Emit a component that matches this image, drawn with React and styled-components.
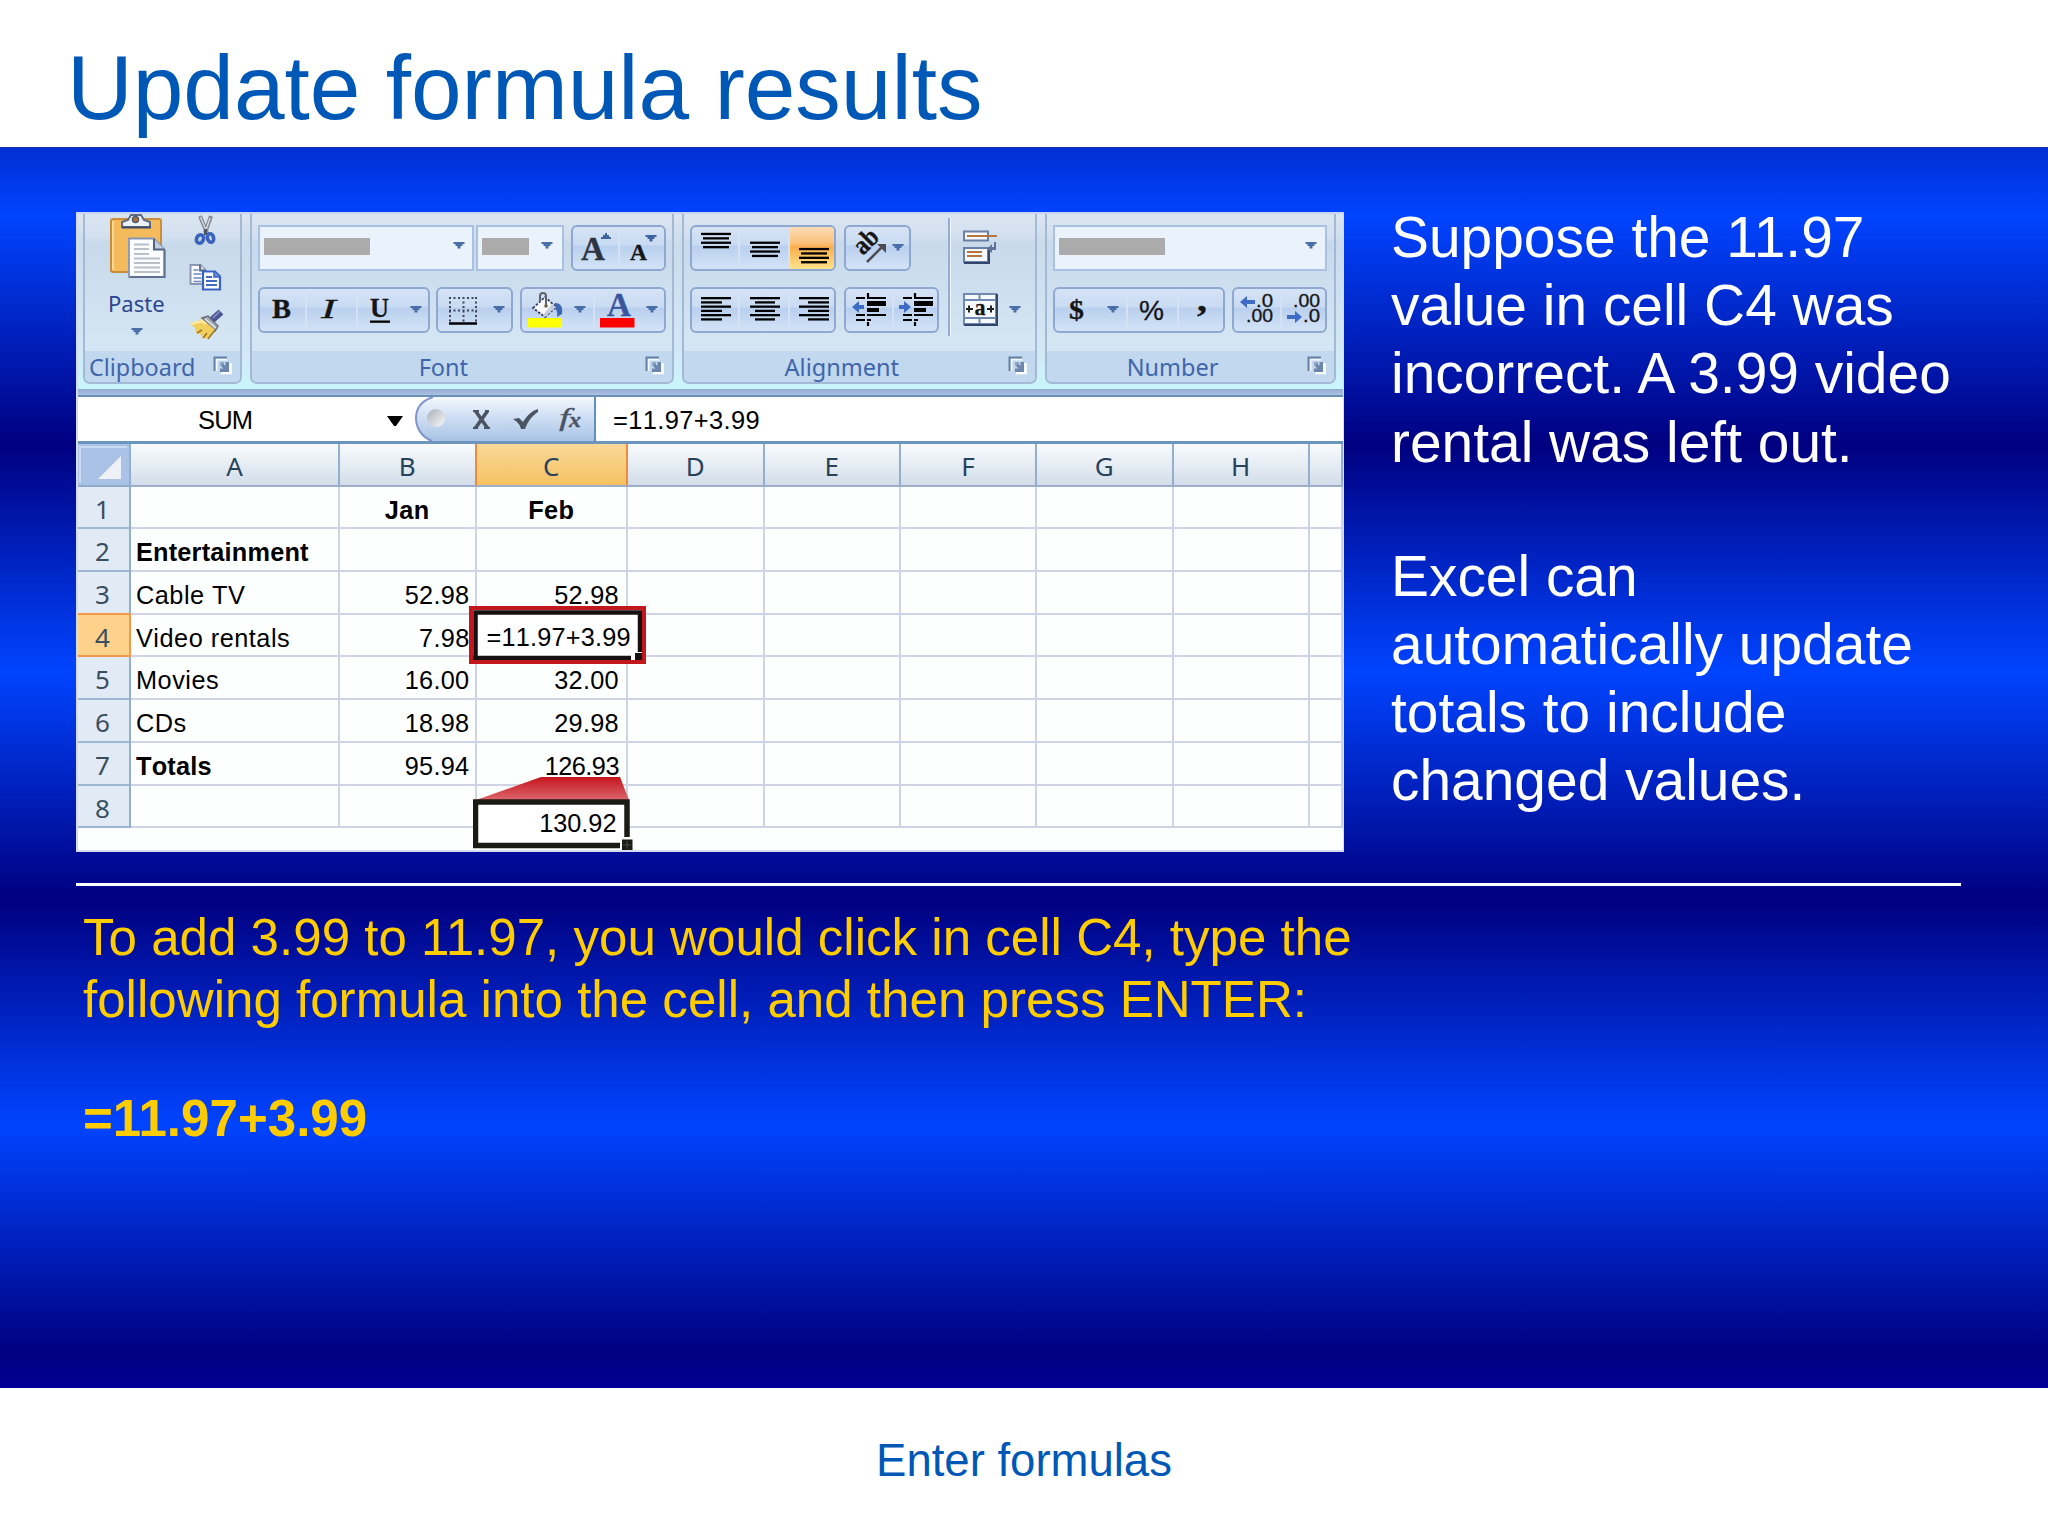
import React from "react";
import styled, { createGlobalStyle, css } from "styled-components";

const Global = createGlobalStyle`
  * { box-sizing: border-box; }
  body { margin: 0; background: #fff; }
`;

const sans = `"Liberation Sans", Arial, sans-serif`;
const ui = `"Noto Sans", "Open Sans", sans-serif`;

/* ---------- slide ---------- */
const Slide = styled.main`
  width: 2048px;
  height: 1536px;
  display: flex;
  flex-direction: column;
  background: #fff;
  font-family: ${sans};
  overflow: hidden;
`;
const Header = styled.header`
  height: 147px;
  padding: 33px 0 0 67px;
`;
const Title = styled.h1`
  margin: 0;
  font-size: 91px;
  line-height: 110px;
  font-weight: 400;
  color: #0058b6;
  white-space: nowrap;
`;
const Body = styled.section`
  height: 1241px;
  padding: 55px 87px 0 76px;
  border-top: 1px solid #1430b4;
  background: linear-gradient(
    180deg,
    #0030d2 0px,
    #0044ff 68px,
    #000080 297px,
    #0044ff 523px,
    #000080 751px,
    #0044ff 977px,
    #000080 1205px,
    #000096 1241px
  );
`;
const Top = styled.div`
  display: flex;
  height: 680px;
`;
const Aside = styled.div`
  margin-left: 47px;
  color: #fff;
  font-size: 56.9px;
  line-height: 68.2px;
  white-space: nowrap;
`;
const Para = styled.p`
  margin: 0 0 ${(p) => p.$gap || 0}px;
  font-weight: ${(p) => (p.$bold ? 700 : 400)};
`;
const Divider = styled.hr`
  margin: 0;
  border: 0;
  height: 3px;
  background: #fff;
`;
const Steps = styled.div`
  padding: 21px 0 0 7px;
  color: #ffcc00;
  font-size: 51.1px;
  line-height: 61.6px;
  white-space: nowrap;
`;
const Footer = styled.footer`
  padding-top: 43px;
  text-align: center;
  font-size: 45.5px;
  line-height: 60px;
  color: #0058b6;
`;

/* ---------- workbook ---------- */
const Shot = styled.figure`
  margin: 9px 0 0;
  width: 1268px;
  height: 640px;
  display: flex;
  flex-direction: column;
  border: 2px solid #d5dcf2;
  border-top-color: #c9d4ee;
  border-right-width: 1px;
  background: #fdfffe;
  overflow: hidden;
`;
const Ribbon = styled.div`
  height: 175px;
  padding: 0 7px 5px 5px;
  display: flex;
  gap: 8px;
  background: linear-gradient(180deg, #dde5f0 0, #cbdcec 30px, #d3e8f6 140px, #c9f5fb 172px, #c4f7fd 100%);
`;
const RibbonEdge = styled.div`
  height: 8px;
  border-bottom: 2px solid #6a90b6;
  background: linear-gradient(180deg, #93abcf, #abc2e4);
`;
const Group = styled.section`
  width: ${(p) => p.$w}px;
  display: flex;
  flex-direction: column;
  border: 2px solid #a3b9d6;
  border-top: 0;
  border-radius: 0 0 7px 7px;
  background: linear-gradient(180deg, #dbe5f1 0, #d3e0ef 22px, #c8d9eb 30px, #d5e6f4 137px);
  overflow: hidden;
`;
const Controls = styled.div`
  flex: 1;
  display: flex;
  flex-direction: column;
  padding: 11px 0 0 6px;
  gap: 16px;
`;
const ControlRow = styled.div`
  display: flex;
  height: 46px;
`;
const Caption = styled.div`
  height: 31px;
  display: flex;
  justify-content: space-between;
  padding: 0 8px 0 ${(p) => p.$pl}px;
  background: #c1d8ee;
  color: #4065ab;
  font: 400 ${(p) => p.$size || 23.5}px/32px ${ui};
  svg { margin-top: 5px; }
`;
const Buttons = styled.div`
  display: flex;
  height: 46px;
  margin-right: ${(p) => p.$mr || 0}px;
  border: 2px solid #8ea8d1;
  border-radius: 6px;
  background: linear-gradient(180deg, #d5e3f5 0, #c9dbf2 42%, #b9cfee 46%, #d3e4f7 100%);
`;
const Tool = styled.div`
  width: ${(p) => p.$w}px;
  height: 42px;
  border-right: ${(p) => (p.$last ? 0 : 2)}px solid #d3e2f5;
  ${(p) => p.$on && css`
    border-radius: 0 4px 4px 0;
    background: linear-gradient(180deg, #fbdcb4 0, #fcc27c 38%, #fbae4c 48%, #fee48c 100%);
  `}
  svg { display: block; overflow: visible; }
`;
const Combo = styled.div`
  width: ${(p) => p.$w}px;
  height: 46px;
  margin-right: ${(p) => p.$mr || 0}px;
  display: flex;
  align-items: center;
  justify-content: space-between;
  padding: 0 ${(p) => p.$pr || 7}px 4px 4px;
  border: 2px solid #abc1e3;
  background: #eaf2fc;
`;
const Redacted = styled.div`
  width: ${(p) => p.$w}px;
  height: 17px;
  background: #ababab;
`;
const ClipboardArea = styled.div`
  flex: 1;
  display: flex;
`;
const PasteButton = styled.div`
  width: 94px;
  padding-left: 23px;
  display: flex;
  flex-direction: column;
  gap: 5px;
  svg { display: block; }
`;
const PasteLabel = styled.span`
  height: 29px;
  color: #2b4690;
  font: 400 22px/28px ${ui};
`;
const SmallTools = styled.div`
  padding: 0 0 0 9px;
  svg { display: block; }
`;

const FormulaBar = styled.div`
  height: 47px;
  display: flex;
  border-bottom: 3px solid #6b95bd;
  background: #fff;
  color: #000;
  font: 25.5px/46px ${sans};
  font-kerning: none;
`;
const NameBox = styled.div`
  width: 337px;
  display: flex;
  justify-content: space-between;
  padding: 0 12px 0 120px;
  letter-spacing: -0.8px;
  svg { margin-top: 19px; }
`;
const Functions = styled.div`
  width: 181px;
  border-right: 2px solid #5f8fbd;
  svg { display: block; }
`;
const Entry = styled.div`
  padding-left: 17px;
  letter-spacing: 0.35px;
`;

const Sheet = styled.div`
  display: grid;
  grid-template-columns: 53px 209px 136.5px 151.5px 136.5px 136.5px 136px 136.5px 136.5px 1fr;
  grid-template-rows: 42.5px repeat(8, 42.72px);
  font: 25.3px/43px ${sans};
  font-kerning: none;
  color: #000;
`;
const ColHead = styled.div`
  border-right: 2px solid #93afcd;
  border-bottom: 2px solid #9cafc9;
  background: linear-gradient(180deg, #f8fbfd, #e4ebf2 55%, #d2dde9);
  color: #27435c;
  text-align: center;
  font: 26px/44px ${ui};
  ${(p) => p.$on && css`
    margin-left: -2px;
    border-right-color: #ee8c3e;
    border-left: 2px solid #ee8c3e;
    background: linear-gradient(180deg, #fad898, #f5c263);
  `}
`;
const Corner = styled.div`
  border-right: 2px solid #8fb0d4;
  border-bottom: 2px solid #8fabd0;
  background: #a9c2e5;
  svg { display: block; }
`;
const RowHead = styled.div`
  border-right: 2px solid #8fb0cf;
  border-bottom: 2px solid #9cb5d0;
  background: #e2eaf6;
  color: #3a4f5e;
  padding-right: 2px;
  text-align: center;
  font: 26px/44px ${ui};
  ${(p) => p.$on && css`
    margin-top: -2px;
    border: 2px solid #ee9a4a;
    border-left: 0;
    background: #fed28a;
  `}
`;
const Cell = styled.div`
  position: relative;
  border-right: 2px solid #cfd3e6;
  border-bottom: 2px solid #cfd3e3;
  padding: 2px ${(p) => p.$pr ?? 0}px 0 ${(p) => p.$pl ?? 0}px;
  text-align: ${(p) => p.$align || "left"};
  font-weight: ${(p) => (p.$bold ? 700 : 400)};
  letter-spacing: ${(p) => p.$track ?? 0}px;
  white-space: nowrap;
`;
const Editing = styled.div`
  position: absolute;
  z-index: 2;
  left: -8px;
  top: -9px;
  width: 177px;
  height: 58px;
  border: 4px solid #c2181d;
  background: #fff;
  svg { position: absolute; left: 0; top: 0; }
  span { position: absolute; left: 14px; top: 6px; letter-spacing: 0.2px; }
`;
const Result = styled.div`
  position: absolute;
  z-index: 2;
  left: -4px;
  top: -9px;
  width: 160px;
  height: 74px;
  svg { position: absolute; left: 0; top: 0; }
  span { position: absolute; right: 16px; top: 25px; }
`;

/* ---------- drawings ---------- */
const Glyph = ({ x, y = 0, w, h = 42, children }) => (
  <svg width={w} height={h} viewBox={`${x} ${y} ${w} ${h}`}>{children}</svg>
);
const Drop = ({ x, y, fill = "#4a6ea8" }) => (
  <path d={`M${x - 5.5} ${y}h11v2h-2v2h-2v2.5h-3v-2.5h-2v-2h-2z`} fill={fill} />
);
const DropIcon = () => (
  <svg width="12" height="8" viewBox="0 0 12 8"><Drop x={6} y={0} /></svg>
);
const Lines = ({ x, y, widths, align = "center", step = 4.4 }) => (
  <g fill="#000">
    {widths.map((w, i) => (
      <rect key={i} x={align === "left" ? x : align === "right" ? x + 30 - w : x + (30 - w) / 2} y={y + i * step} width={w} height="2.3" />
    ))}
  </g>
);
const Launcher = () => (
  <svg width="19" height="19" viewBox="0 0 19 19">
    <path d="M3.500 15V3.500H14" fill="none" stroke="#fff" strokeWidth="2" opacity=".8" />
    <path d="M1.500 15V1.500H14" fill="none" stroke="#6380a5" strokeWidth="2" />
    <path d="M8 17h9.500V7" fill="none" stroke="#fff" strokeWidth="2.500" />
    <path d="M12.500 6H16v10H7v-3.500h3.500L7.500 9.500 9.500 7l3 3z" fill="#6c87ab" />
    <path d="M7 6h4v2H9v2H7z" fill="#8ea6c4" />
  </svg>
);
const PasteIcon = () => (
  <svg width="60" height="70" viewBox="108 214 60 70">
    <rect x="111" y="219" width="50" height="53" rx="2" fill="#f3bb5b" stroke="#c98e3a" strokeWidth="2" />
    <path d="M113 221v49" stroke="#fbd893" strokeWidth="2" />
    <path d="M122 227v-5l6-2 3-5h10l3 5 6 2v5z" fill="#eef1f6" stroke="#5f6b86" strokeWidth="2" />
    <path d="M122 227.500h29" stroke="#3e4a66" strokeWidth="2" />
    <circle cx="135.500" cy="219.500" r="3" fill="#b0742e" stroke="#525c75" strokeWidth="1.500" />
    <path d="M129 238.500h25l10.500 11V277H129z" fill="#fbfcfe" stroke="#8796b3" strokeWidth="1.800" />
    <path d="M154 239v10.500h10.500" fill="#c3cde0" stroke="#52617f" strokeWidth="2" />
    <path d="M164.500 250v27H130" fill="none" stroke="#5f7193" strokeWidth="2" />
    <path d="M134 244.500h15M134 249h15M134 254h15M134 258.500h26M134 263h26M134 267.500h26M134 272h26" stroke="#b9bfcb" strokeWidth="1.800" />
  </svg>
);
const CutIcon = () => (
  <svg width="36" height="46" viewBox="188 214 36 46">
    <path d="M200 216l7 17M211 216l-6 17" stroke="#858b96" strokeWidth="4" />
    <path d="M200.500 217l5 12M210 218l-4 12" stroke="#d6dae0" strokeWidth="1.300" />
    <path d="M205.500 229v6" stroke="#4c5364" strokeWidth="3" />
    <ellipse cx="200" cy="239" rx="3.400" ry="4.400" fill="#c6d6f0" stroke="#3b63bb" strokeWidth="3.600" transform="rotate(25 200 239)" />
    <ellipse cx="210.500" cy="238" rx="3.100" ry="4.300" fill="#c6d6f0" stroke="#3b63bb" strokeWidth="3.600" transform="rotate(-15 210.500 238)" />
  </svg>
);
const CopyIcon = () => (
  <svg width="36" height="48" viewBox="188 260 36 48">
    <path d="M190.500 265h10l5 5v14h-15z" fill="#fbfcff" stroke="#8b98b5" strokeWidth="2" />
    <path d="M200 264.500v6h6" fill="#cfd8e8" stroke="#5d6680" strokeWidth="1.800" />
    <path d="M193.500 270h5M193.500 274h8M193.500 278h8M193.500 281.500h8" stroke="#6d86c0" strokeWidth="1.500" />
    <path d="M203 271.500h12l5 5V289.500h-17z" fill="#fbfcff" stroke="#3a62c0" strokeWidth="2.200" />
    <path d="M214 271.500v5.500h6" fill="#6e8fd6" stroke="#3a62c0" strokeWidth="1.500" />
    <path d="M206 277h6M206 281h11M206 285h11" stroke="#4169c2" strokeWidth="1.800" />
  </svg>
);
const BrushIcon = () => (
  <svg width="38" height="36" viewBox="188 308 38 36">
    <path d="M212 320l9-8" stroke="#4c5592" strokeWidth="7" />
    <path d="M213 318l7-7" stroke="#8f97c8" strokeWidth="1.500" />
    <path d="M202 318l6-2 10 10-3 5z" fill="#a8adb6" stroke="#6a6f7c" strokeWidth="1.500" />
    <path d="M205 319l11 9" stroke="#e3e6ea" strokeWidth="1.500" />
    <path d="M190 324l12-5 13 11-7 9-5-1-3-4-4-1-1-5z" fill="#f1ce5c" />
    <path d="M191 324l11-3 4 3" stroke="#fae9a4" strokeWidth="2.500" fill="none" />
    <path d="M197 333l5-3M203 338l4-5M215 330l-7 9" stroke="#9c7a2c" strokeWidth="1.600" />
  </svg>
);
const serif = "Liberation Serif, serif";
const Letter = ({ x, y, size, fill = "#151515", weight = 700, style, children, w, family = serif }) => (
  <text x={x} y={y} fontFamily={family} fontSize={size} fontWeight={weight} fontStyle={style} fill={fill}
    textLength={w} lengthAdjust="spacingAndGlyphs" stroke={fill} strokeWidth=".3">{children}</text>
);
const Indent = ({ x, out }) => (
  <g>
    <path d={`M${x + 4} 298h9M${x + 4} 315h9M${x + 4} 320h9M${x + 15} 298h19M${x + 15} 315h19M${x + 15} 320h4`} stroke="#000" strokeWidth="2.200" />
    <path d={`M${x + 16} 293v4M${x + 16} 322v4`} stroke="#000" strokeWidth="2.200" />
    <rect x={x + 15} y="301" width="19" height="5" />
    <rect x={x + 15} y="308" width="12" height="4" />
    {out
      ? <path d={`M${x} 307l7-6v4h5v4h-5v4z`} fill="#3e6bc6" />
      : <path d={`M${x + 12} 307l-7-6v4h-5v4h5v4z`} fill="#3e6bc6" />}
  </g>
);

/* ---------- data ---------- */
const rows = [
  ["", "Jan", "Feb"],
  ["Entertainment", "", ""],
  ["Cable TV", "52.98", "52.98"],
  ["Video rentals", "7.98", ""],
  ["Movies", "16.00", "32.00"],
  ["CDs", "18.98", "29.98"],
  ["Totals", "95.94", "126.93"],
  ["", "", ""],
];

const ClipboardGroup = () => (
  <Group $w={159}>
    <ClipboardArea>
      <PasteButton>
        <PasteIcon />
        <PasteLabel>Paste</PasteLabel>
        <svg width="60" height="20" viewBox="108 322 60 20"><Drop x={137} y={327} /></svg>
      </PasteButton>
      <SmallTools>
        <CutIcon />
        <CopyIcon />
        <BrushIcon />
      </SmallTools>
    </ClipboardArea>
    <Caption $pl={4} $size={23.4}>Clipboard<Launcher /></Caption>
  </Group>
);

const FontGroup = () => (
  <Group $w={425}>
    <Controls>
      <ControlRow>
        <Combo $w={216} $mr={2}><Redacted $w={106} /><DropIcon /></Combo>
        <Combo $w={88} $pr={9} $mr={7}><Redacted $w={47} /><DropIcon /></Combo>
        <Buttons>
          <Tool $w={47}><Glyph x={573} y={227} w={45}>
            <Letter x={581} y={260} size={33} w={24} fill="#2e3340">A</Letter>
            <path d="M601 239h10v-2h-2v-2h-2v-2h-2v2h-2v2h-2z" fill="#3f64a4" />
          </Glyph></Tool>
          <Tool $w={44} $last><Glyph x={620} y={227} w={44}>
            <Letter x={630} y={260} size={23} w={17}>A</Letter>
            <Drop x={651} y={235} fill="#3f64a4" />
          </Glyph></Tool>
        </Buttons>
      </ControlRow>
      <ControlRow>
        <Buttons $mr={6}>
          <Tool $w={47}><Glyph x={260} y={289} w={45}><Letter x={272} y={318} size={28} w={19}>B</Letter></Glyph></Tool>
          <Tool $w={51}><Glyph x={307} y={289} w={49}><Letter x={321} y={318} size={28} w={15} weight={400} style="italic">I</Letter></Glyph></Tool>
          <Tool $w={70} $last><Glyph x={358} y={289} w={70}>
            <Letter x={370} y={317} size={27} w={19}>U</Letter>
            <rect x="370" y="320.500" width="20" height="2.300" />
            <Drop x={416} y={306} />
          </Glyph></Tool>
        </Buttons>
        <Buttons $mr={7}>
          <Tool $w={73} $last><Glyph x={438} y={289} w={73}>
            <path d="M449 298h28M449 310.500h28M450 297v26M463.500 297v26M476 297v26" stroke="#3c4658" strokeWidth="2" strokeDasharray="2 2.500" />
            <path d="M449 323.500h28" stroke="#000" strokeWidth="2.500" />
            <Drop x={499} y={306} />
          </Glyph></Tool>
        </Buttons>
        <Buttons>
          <Tool $w={73}><Glyph x={522} y={289} w={71}>
            <path d="M555 303c6 0 8 4 7 11l-5 3c1-6-1-9-5-10z" fill="#3f68b4" />
            <path d="M533 308l12-11 11 10-11 10z" fill="#f7f9fc" stroke="#35405c" strokeWidth="1.800" strokeDasharray="2.500 1.500" />
            <path d="M545 317l11-10-4-3-9 11z" fill="#c3cede" />
            <path d="M540 302v-6c0-4 6-4 6 0v9" fill="none" stroke="#5c636f" strokeWidth="2" />
            <circle cx="546" cy="306" r="1.800" fill="#6d6148" />
            <rect x="528" y="318" width="34" height="9.500" fill="#ff0" />
            <Drop x={580} y={306} />
          </Glyph></Tool>
          <Tool $w={69} $last><Glyph x={595} y={289} w={69}>
            <Letter x={607} y={315.5} size={33} w={24} fill="#3a559c">A</Letter>
            <rect x="600" y="318" width="34.500" height="9.500" fill="#f00" />
            <Drop x={652} y={306} />
          </Glyph></Tool>
        </Buttons>
      </ControlRow>
    </Controls>
    <Caption $pl={167}>Font<Launcher /></Caption>
  </Group>
);

const AlignSplit = styled.div`
  display: flex;
`;
const AlignLeft = styled.div`
  width: 258px;
  display: flex;
  flex-direction: column;
  gap: 16px;
`;
const Rule = styled.div`
  width: 3px;
  height: 118px;
  margin-top: -7px;
  border-left: 2px solid #93aed4;
  border-right: 1px solid #eef5fc;
`;

const AlignmentGroup = () => (
  <Group $w={356}>
    <Controls>
      <AlignSplit>
        <AlignLeft>
          <ControlRow>
            <Buttons $mr={8}>
              <Tool $w={48}><Glyph x={692} y={227} w={46}><Lines x={701} y={232.8} widths={[30, 26, 30, 26]} /></Glyph></Tool>
              <Tool $w={50}><Glyph x={740} y={227} w={48}><Lines x={750} y={241.6} widths={[30, 26, 30, 26]} /></Glyph></Tool>
              <Tool $w={44} $last $on><Glyph x={790} y={227} w={44}><Lines x={799} y={247.9} widths={[30, 26, 30, 26]} /></Glyph></Tool>
            </Buttons>
            <Buttons>
              <Tool $w={63} $last><Glyph x={846} y={227} w={63}>
                <g transform="translate(863 256) rotate(-45)"><Letter x={0} y={0} size={27} w={25}>ab</Letter></g>
                <path d="M867 262l16-16" stroke="#4c4c55" strokeWidth="2.500" />
                <path d="M877 244h9v9z" fill="#4c4c55" />
                <Drop x={898} y={244} />
              </Glyph></Tool>
            </Buttons>
          </ControlRow>
          <ControlRow>
            <Buttons $mr={8}>
              <Tool $w={48}><Glyph x={692} y={289} w={46}><Lines x={701} y={297} align="left" widths={[30, 21, 30, 21, 30, 21]} step={4.25} /></Glyph></Tool>
              <Tool $w={50}><Glyph x={740} y={289} w={48}><Lines x={750} y={297} widths={[30, 20, 30, 20, 30, 20]} step={4.25} /></Glyph></Tool>
              <Tool $w={44} $last><Glyph x={790} y={289} w={44}><Lines x={799} y={297} align="right" widths={[30, 21, 30, 21, 30, 21]} step={4.25} /></Glyph></Tool>
            </Buttons>
            <Buttons>
              <Tool $w={48}><Glyph x={846} y={289} w={46}><Indent x={852} out /></Glyph></Tool>
              <Tool $w={43} $last><Glyph x={894} y={289} w={43}><Indent x={899} /></Glyph></Tool>
            </Buttons>
          </ControlRow>
        </AlignLeft>
        <Rule />
        <Glyph x={951} y={225} w={80} h={110}>
          <path d="M964 231.500h24v9h-24z" fill="#f6f9fd" stroke="#6a7fa4" strokeWidth="2" />
          <path d="M967 236h30" stroke="#b5763f" strokeWidth="2.200" />
          <path d="M964 248h24v14h-24z" fill="#f6f9fd" stroke="#6a7fa4" strokeWidth="2" />
          <path d="M989 249v14h-25" stroke="#34466b" strokeWidth="2" fill="none" />
          <path d="M967 252h15M967 256h15" stroke="#b5763f" strokeWidth="2" />
          <path d="M996 242v8h-4v3l-5-4 5-5v3h2v-5z" fill="#5e7397" />
          <path d="M964 294h32v30h-32z" fill="#f6f9fd" stroke="#7088b4" strokeWidth="2" />
          <path d="M964 300h32M964 318h32M979.500 294v6M979.500 318v6" stroke="#7088b4" strokeWidth="2" />
          <path d="M997 294v31h-33" fill="none" stroke="#34466b" strokeWidth="2" />
          <Letter x={974.5} y={315} size={24} w={11}>a</Letter>
          <path d="M966 309h7M987 309h7M969 305.500v7M991 305.500v7" stroke="#222" strokeWidth="2" />
          <Drop x={1015} y={306} />
        </Glyph>
      </AlignSplit>
    </Controls>
    <Caption $pl={101}>Alignment<Launcher /></Caption>
  </Group>
);

const NumberGroup = () => (
  <Group $w={292}>
    <Controls>
      <ControlRow>
        <Combo $w={274} $pr={8}><Redacted $w={106} /><DropIcon /></Combo>
      </ControlRow>
      <ControlRow>
        <Buttons $mr={7}>
          <Tool $w={73}><Glyph x={1055} y={289} w={71}>
            <Letter x={1069} y={319} size={28} w={15}>$</Letter>
            <Drop x={1113} y={306} />
          </Glyph></Tool>
          <Tool $w={51}><Glyph x={1128} y={289} w={49}><Letter x={1139} y={320} size={28} w={25} weight={400} family={sans}>%</Letter></Glyph></Tool>
          <Tool $w={44} $last><Glyph x={1179} y={289} w={44}><Letter x={1197} y={311} size={34} w={10}>,</Letter></Glyph></Tool>
        </Buttons>
        <Buttons>
          <Tool $w={48}><Glyph x={1234} y={289} w={46}>
            <Letter x={1256} y={307} size={17.5} w={17} weight={400} family={sans}>.0</Letter>
            <Letter x={1246} y={322} size={17.5} w={27} weight={400} family={sans}>.00</Letter>
            <path d="M1240 302l7-6v4h8v4h-8v4z" fill="#3e6bc6" />
          </Glyph></Tool>
          <Tool $w={43} $last><Glyph x={1282} y={289} w={43}>
            <Letter x={1293} y={307} size={17.5} w={27} weight={400} family={sans}>.00</Letter>
            <Letter x={1303} y={322} size={17.5} w={17} weight={400} family={sans}>.0</Letter>
            <path d="M1302 317l-7-6v4h-8v4h8v4z" fill="#3e6bc6" />
          </Glyph></Tool>
        </Buttons>
      </ControlRow>
    </Controls>
    <Caption $pl={80}>Number<Launcher /></Caption>
  </Group>
);

const FunctionIcons = () => (
  <svg width="179" height="44" viewBox="415 397 179 44">
    <defs>
      <linearGradient id="bar" x1="0" y1="0" x2="0" y2="1">
        <stop offset="0" stopColor="#f3f8fd" /><stop offset=".45" stopColor="#cfdff3" /><stop offset="1" stopColor="#a9c3e6" />
      </linearGradient>
      <linearGradient id="ball" x1="0" y1="0" x2="1" y2="1">
        <stop offset="0" stopColor="#a9adb6" /><stop offset="1" stopColor="#fafbfd" />
      </linearGradient>
    </defs>
    <path d="M436 397C422 399 416 408 416 418s6 21 18 23h160v-44z" fill="url(#bar)" />
    <path d="M433 397C421 401 416 409 416 418s5 19 16 23" fill="none" stroke="#7f95cc" strokeWidth="2" />
    <circle cx="436" cy="418" r="9" fill="url(#ball)" />
    <path d="M473 411h6M485 411h4M473 428h5M484 428h6" fill="none" stroke="#4a5463" strokeWidth="2" />
    <path d="M475.500 411l12 17M487.500 411l-12 17" stroke="#4a5463" strokeWidth="3.600" />
    <path d="M513 419l6-1 4 4c4-6 8-11 15-13v3c-6 4-10 9-13 17h-4c-1-4-3-7-8-10z" fill="#4a5463" />
    <Letter x={559} y={426} size={26} w={11} fill="#4a5463" style="italic" weight={400}>f</Letter>
    <Letter x={569} y={427} size={20} w={12} fill="#4a5463" style="italic">x</Letter>
  </svg>
);

const renderCell = (r, c) => {
  const v = c < 3 ? rows[r][c] : "";
  const key = `${r}-${c}`;
  if (r === 3 && c === 2)
    return (
      <Cell key={key}>
        <Editing>
          <svg width="169" height="50" viewBox="472 610 169 50">
            <path d="M474.500 660V612.500H639V652" fill="none" stroke="#141110" strokeWidth="4.500" />
            <path d="M472 658h158" stroke="#141110" strokeWidth="4.500" />
            <path d="M634 653h7v7h-7z" fill="#141110" />
          </svg>
          <span>=11.97+3.99</span>
        </Editing>
      </Cell>
    );
  if (r === 7 && c === 2)
    return (
      <Cell key={key}>
        <Result>
          <svg width="160" height="74" viewBox="473 776 160 74">
            <defs>
              <linearGradient id="fold" x1="0" y1="0" x2="0" y2="1">
                <stop offset="0" stopColor="#c5141c" /><stop offset="1" stopColor="#dc666c" />
              </linearGradient>
            </defs>
            <path d="M541 776h79l9 23H476z" fill="url(#fold)" />
            <rect x="475.500" y="801" width="151.500" height="43.500" fill="#fff" stroke="#1b1a14" strokeWidth="5.500" />
            <path d="M620 836h13v14h-13z" fill="#fff" />
            <path d="M622 838.500h10.500V849.500H622z" fill="#1b1a14" />
            <path d="M627 840v8M623 844h8" stroke="#4b4a3c" strokeWidth="1" />
          </svg>
          <span>130.92</span>
        </Result>
      </Cell>
    );
  if (c === 0) {
    const bold = r === 1 || r === 6;
    return <Cell key={key} $pl={5} $bold={bold} $track={bold ? 0.2 : 0.5}>{v}</Cell>;
  }
  if (r === 0) return <Cell key={key} $align="center" $bold $track={0.4}>{v}</Cell>;
  return (
    <Cell key={key} $align="right" $pr={c === 1 ? 5 : 7} $track={r === 6 && c === 2 ? -0.5 : 0.3}>{v}</Cell>
  );
};

export default function App() {
  return (
    <>
      <Global />
      <Slide>
        <Header><Title>Update formula results</Title></Header>
        <Body>
          <Top>
            <Shot>
              <Ribbon>
                <ClipboardGroup />
                <FontGroup />
                <AlignmentGroup />
                <NumberGroup />
              </Ribbon>
              <RibbonEdge />
              <FormulaBar>
                <NameBox>SUM
                  <svg width="16" height="11" viewBox="0 0 16 11"><path d="M0 0h16l-7 10h-2z" /></svg>
                </NameBox>
                <Functions><FunctionIcons /></Functions>
                <Entry>=11.97+3.99</Entry>
              </FormulaBar>
              <Sheet>
                <Corner>
                  <svg width="51" height="40" viewBox="0 0 51 40">
                    <path d="M2 39V3h47" fill="none" stroke="#c9dbf2" strokeWidth="2" />
                    <path d="M43 12v23H20z" fill="#eef2f8" />
                  </svg>
                </Corner>
                {["A", "B", "C", "D", "E", "F", "G", "H", ""].map((c, i) => (
                  <ColHead key={i} $on={c === "C"}>{c}</ColHead>
                ))}
                {rows.map((_, r) => (
                  <React.Fragment key={r}>
                    <RowHead $on={r === 3}>{r + 1}</RowHead>
                    {Array.from({ length: 9 }, (_, c) => renderCell(r, c))}
                  </React.Fragment>
                ))}
              </Sheet>
            </Shot>
            <Aside>
              <Para $gap={66}>
                Suppose the 11.97<br />value in cell C4 was<br />incorrect. A 3.99 video<br />rental was left out.
              </Para>
              <Para>
                Excel can<br />automatically update<br />totals to include<br />changed values.
              </Para>
            </Aside>
          </Top>
          <Divider />
          <Steps>
            <Para $gap={58}>
              To add 3.99 to 11.97, you would click in cell C4, type the<br />following formula into the cell, and then press ENTER:
            </Para>
            <Para $bold>=11.97+3.99</Para>
          </Steps>
        </Body>
        <Footer>Enter formulas</Footer>
      </Slide>
    </>
  );
}
